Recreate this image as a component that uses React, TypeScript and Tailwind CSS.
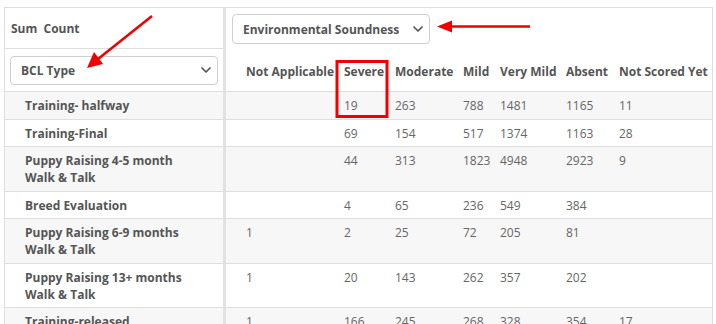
import React from 'react'
import { ChevronDown } from 'lucide-react'

type Row = { label: string[]; values: string[] }

const columns = ['Not Applicable', 'Severe', 'Moderate', 'Mild', 'Very Mild', 'Absent', 'Not Scored Yet']

const rows: Row[] = [
  { label: ['Training- halfway'], values: ['', '19', '263', '788', '1481', '1165', '11'] },
  { label: ['Training-Final'], values: ['', '69', '154', '517', '1374', '1163', '28'] },
  { label: ['Puppy Raising 4-5 month', 'Walk & Talk'], values: ['', '44', '313', '1823', '4948', '2923', '9'] },
  { label: ['Breed Evaluation'], values: ['', '4', '65', '236', '549', '384', ''] },
  { label: ['Puppy Raising 6-9 months', 'Walk & Talk'], values: ['1', '2', '25', '72', '205', '81', ''] },
  { label: ['Puppy Raising 13+ months', 'Walk & Talk'], values: ['1', '20', '143', '262', '357', '202', ''] },
  { label: ['Training-released'], values: ['1', '166', '245', '268', '328', '354', '17'] },
]

const gridCols = 'grid grid-cols-[118px_51px_68px_37px_66px_53px_1fr]'

const Select = ({ label, className }: { label: string; className: string }) => (
  <div
    className={`flex items-center justify-between rounded-[4px] border border-[#cfcfcf] bg-white pl-[10px] pr-[3px] font-bold text-[#555] ${className}`}
  >
    <span>{label}</span>
    <ChevronDown size={16} strokeWidth={2.6} color="#555" />
  </div>
)

export default function App() {
  return (
    <div className="relative h-[324px] w-[716px] overflow-hidden bg-white font-['Open_Sans',sans-serif] text-[12px] leading-[17px]">
      <div className="ml-[4px] mt-[7px] w-[709px] border-x border-t border-[#dedede]">
        {/* header */}
        <div className="flex border-b border-[#dedede]">
          <div className="w-[221px] border-r-[3px] border-[#e2e2e2]">
            <div className="flex h-[41px] items-center border-b border-[#dedede] pl-[6px] font-bold text-[#555]">
              <span className="whitespace-pre">Sum  Count</span>
            </div>
            <div className="flex h-[42px] items-center px-[5px]">
              <Select label="BCL Type" className="h-[29px] w-full" />
            </div>
          </div>
          <div className="flex flex-1 flex-col">
            <Select label="Environmental Soundness" className="ml-[6px] mt-[6px] h-[30px] w-[198px]" />
            <div className={`${gridCols} mt-[19px] font-bold text-[#555]`}>
              {columns.map((c, i) => (
                <div key={c} className={i === 0 ? 'pl-[20px]' : ''}>
                  {c}
                </div>
              ))}
            </div>
          </div>
        </div>

        {/* body */}
        {rows.map((r, idx) => (
          <div
            key={idx}
            className={`flex border-b border-[#dedede] ${idx % 2 === 0 ? 'bg-[#f7f7f7]' : 'bg-white'}`}
          >
            <div className="w-[221px] border-r-[3px] border-[#e2e2e2] pb-[4.5px] pl-[20px] pt-[5px] font-bold text-[#555]">
              {r.label.map((l) => (
                <div key={l}>{l}</div>
              ))}
            </div>
            <div className={`${gridCols} flex-1 pb-[4.5px] pt-[5px] text-[#666]`}>
              {r.values.map((v, i) => (
                <div key={i} className={i === 0 ? 'pl-[20px]' : ''}>
                  {v}
                </div>
              ))}
            </div>
          </div>
        ))}
      </div>

      {/* red annotations */}
      <svg className="pointer-events-none absolute left-0 top-0" width="716" height="324">
        <line x1="152" y1="16" x2="98" y2="59" stroke="#f00000" strokeWidth="2.5" />
        <polygon points="87,68 94,52 103,64" fill="#f00000" />
        <line x1="530" y1="26.5" x2="450" y2="26.5" stroke="#f00000" strokeWidth="2.5" />
        <polygon points="437,26.5 452,20.5 452,32.5" fill="#f00000" />
        <rect x="337" y="61.5" width="50" height="55" fill="none" stroke="#f00000" strokeWidth="3" />
      </svg>
    </div>
  )
}
